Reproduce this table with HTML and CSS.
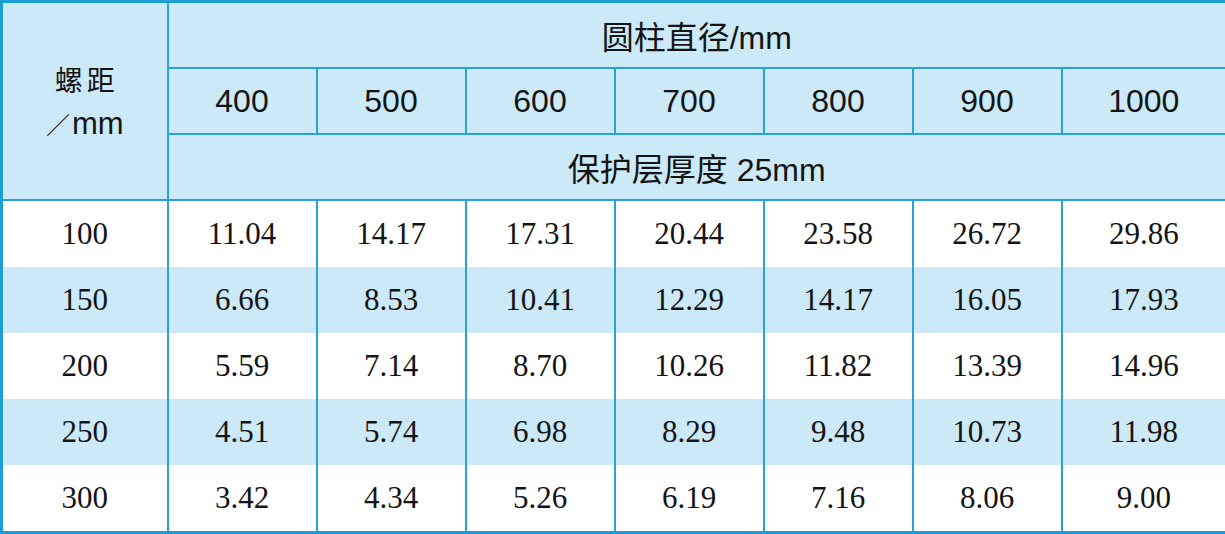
FILE: index.html
```html
<!DOCTYPE html>
<html lang="zh-CN">

<head>
    <meta charset="UTF-8">
    <meta name="viewport" content="width=device-width, initial-scale=1.0">
    <title>螺距与圆柱直径</title>
    <link rel="stylesheet" href="styles.css">
</head>

<body>
    <table class="pitchTable">
        <colgroup>
            <col class="colPitch">
            <col class="colData">
            <col class="colData">
            <col class="colData">
            <col class="colData">
            <col class="colData">
            <col class="colData">
            <col class="colLast">
        </colgroup>
        <thead>
            <tr>
                <th rowspan="3" class="pitchHead">
                    <span class="pitchName">螺距</span><br><span class="pitchSlash">／</span>mm
                </th>
                <th colspan="7">圆柱直径/mm</th>
            </tr>
            <tr>
                <th>400</th>
                <th>500</th>
                <th>600</th>
                <th>700</th>
                <th>800</th>
                <th>900</th>
                <th>1000</th>
            </tr>
            <tr>
                <th colspan="7">保护层厚度 25mm</th>
            </tr>
        </thead>
        <tbody>
            <tr>
                <td>100</td><td>11.04</td><td>14.17</td><td>17.31</td><td>20.44</td><td>23.58</td><td>26.72</td><td>29.86</td>
            </tr>
            <tr>
                <td>150</td><td>6.66</td><td>8.53</td><td>10.41</td><td>12.29</td><td>14.17</td><td>16.05</td><td>17.93</td>
            </tr>
            <tr>
                <td>200</td><td>5.59</td><td>7.14</td><td>8.70</td><td>10.26</td><td>11.82</td><td>13.39</td><td>14.96</td>
            </tr>
            <tr>
                <td>250</td><td>4.51</td><td>5.74</td><td>6.98</td><td>8.29</td><td>9.48</td><td>10.73</td><td>11.98</td>
            </tr>
            <tr>
                <td>300</td><td>3.42</td><td>4.34</td><td>5.26</td><td>6.19</td><td>7.16</td><td>8.06</td><td>9.00</td>
            </tr>
        </tbody>
    </table>
</body>

</html>
```

FILE: styles.css
```css
:root {
    --lineColor: #2aa2d6;
    --edgeColor: #1d9dd6;
    --tintColor: #cbe9f6;
    --textColor: #141414;
}

body {
    margin: 0;
    background: #fff;
}

.pitchTable {
    width: 1225px;
    table-layout: fixed;
    border-collapse: collapse;
    border: 3px solid var(--edgeColor);
    color: var(--textColor);
}

.colPitch {
    width: 166px;
}

.colData {
    width: 149px;
}

.colLast {
    width: 165px;
}

.pitchTable th {
    height: 64px;
    padding: 0;
    background: var(--tintColor);
    border: 2px solid var(--lineColor);
    font-family: "Liberation Sans", "Noto Sans CJK SC", sans-serif;
    font-size: 32px;
    font-weight: normal;
    text-align: center;
    vertical-align: middle;
}

.pitchTable .pitchHead {
    line-height: 42px;
    padding-top: 2px;
    font-size: 31px;
}

.pitchName {
    font-size: 28px;
    letter-spacing: 4px;
    margin-right: -4px;
}

.pitchSlash {
    font-family: "Noto Sans CJK SC", sans-serif;
    font-size: 24px;
    font-weight: 300;
    margin-right: 2px;
}

.pitchTable td {
    height: 66px;
    padding: 0;
    border-left: 2px solid var(--lineColor);
    border-right: 2px solid var(--lineColor);
    font-family: "Liberation Serif", serif;
    font-size: 31px;
    text-align: center;
    vertical-align: middle;
}

.pitchTable tbody tr:nth-child(even) td {
    background: var(--tintColor);
}
```
